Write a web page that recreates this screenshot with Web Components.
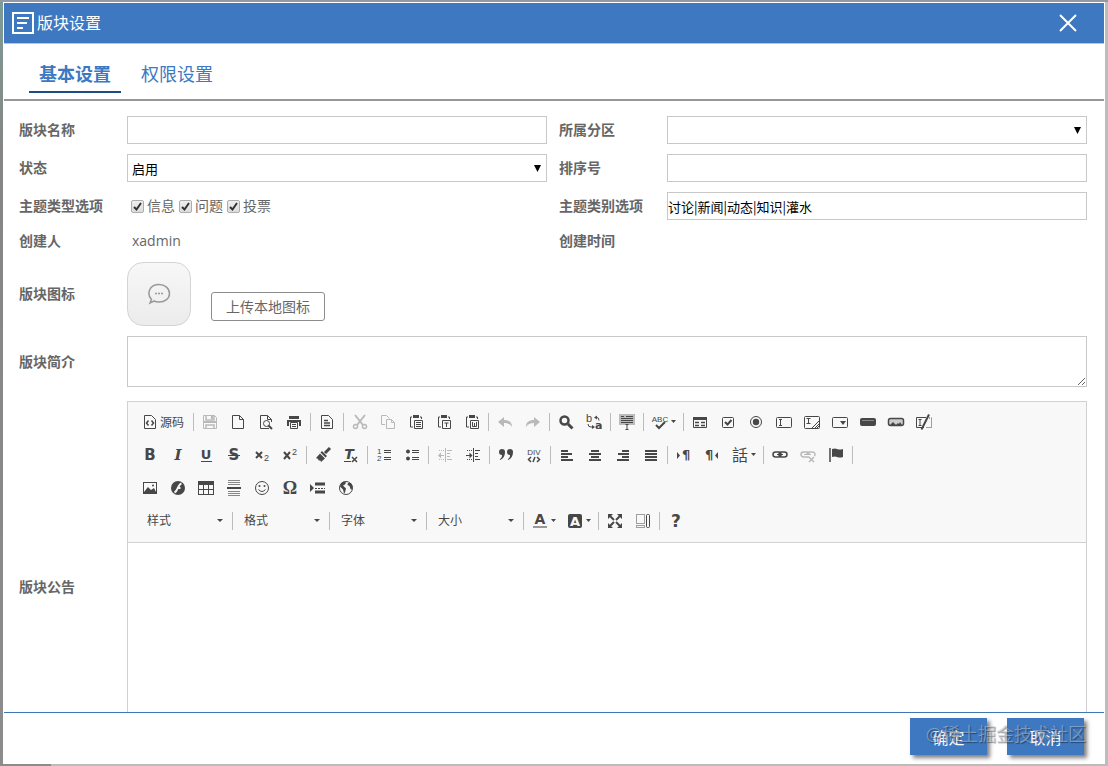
<!DOCTYPE html>
<html lang="zh-CN">
<head>
<meta charset="utf-8">
<title>版块设置</title>
<style>
    :root {
        --clr-primary: #3d78c1;
        --clr-text: #666;
        --clr-line: #c8c8c8;
        --clr-icon: #474747;
    }

    * { box-sizing: border-box; }

    body {
        margin: 0;
        padding: 2px 3px;
        height: 100vh;
        display: flex;
        font: 14px "Open Sans", "Noto Sans CJK SC", sans-serif;
        color: var(--clr-text);
        background:
            linear-gradient(#9298a8, #9298a8) 0 0 / 100% 2px no-repeat,
            linear-gradient(to bottom, #7d9c96, #858585 20%, #8c8c8c) 0 0 / 3px 100% no-repeat,
            linear-gradient(#8c8c8c, #8c8c8c) 0 100% / 51px 2px no-repeat,
            #bcbcbc;
    }
</style>
</head>
<body>

<modal-dialog heading="版块设置">
    <tab-item slot="tabs" active>基本设置</tab-item>
    <tab-item slot="tabs">权限设置</tab-item>

    <text-field label="版块名称"></text-field>
    <select-field label="所属分区"></select-field>
    <select-field label="状态" value="启用"></select-field>
    <text-field label="排序号"></text-field>
    <check-field label="主题类型选项" options="信息,问题,投票"></check-field>
    <text-field label="主题类别选项" value="讨论|新闻|动态|知识|灌水"></text-field>
    <info-field label="创建人" value="xadmin"></info-field>
    <info-field label="创建时间"></info-field>
    <icon-field label="版块图标" wide></icon-field>
    <area-field label="版块简介" wide></area-field>
    <editor-field label="版块公告" wide></editor-field>

    <action-button slot="footer">确定</action-button>
    <action-button slot="footer">取消</action-button>
    <span slot="mark">@稀土掘金技术社区</span>
</modal-dialog>

<script>
const ICONS = {
    source: `<path d="M2.5 1.5h7l4 4v9h-11z"/><path d="M6.5 6.5 4.5 9l2 2.5M9.5 6.5l2 2.5-2 2.5" stroke-width="1.5"/>`,
    save: `<path d="M1.5 1.5h11l2 2v11h-13z"/><path d="M4 1v5h8V1M4 15v-4h8v4" stroke-width="1.5"/><path class="f" d="M9 2h2v3H9zM1 7h14v2H1z"/>`,
    newpage: `<path d="M2.5 1.5h7l4 4v9h-11zM9.5 1.5v4h4"/>`,
    preview: `<path d="M11 14.5H2.5v-13h7l4 4V8M9.5 1.5v4h4"/><circle cx="8.5" cy="9.5" r="3"/><path d="m10.5 11.5 3.5 3.5" stroke-width="2"/>`,
    print: `<path class="f" d="M3 2h10v3H3zM1 6h14v6h-2V8H3v4H1z"/><path d="M4.5 8.5h7v6h-7z"/><path d="M6 10.5h4M6 12.5h4"/>`,
    templates: `<path d="M2.5 1.5h7l4 4v9h-11z"/><path d="M5 6.5h4M5 9h6M5 11.5h6" stroke-width="1.5"/>`,
    cut: `<path d="m3 1 8 10M13 1 5 11" stroke-width="2"/><circle cx="3.5" cy="12.5" r="2" stroke-width="1.5"/><circle cx="12.5" cy="12.5" r="2" stroke-width="1.5"/>`,
    copy: `<path d="M5 10.5H1.5v-9h5l3 3"/><path d="M6.5 5.5h5l3 3v6h-8zM11.5 5.5v3h3"/>`,
    paste: `<path d="M4 3H2.5v10H5M12 3h1.5v2"/><path class="f" d="M5 1h6v3H5z"/><path d="M6.5 6.5h8v8h-8zM8 8.5h5M8 10.5h5M8 12.5h5"/>`,
    pastetext: `<path d="M4 3H2.5v10H5M12 3h1.5v2"/><path class="f" d="M5 1h6v3H5z"/><path d="M6.5 6.5h8v8h-8zM8.5 9h4M10.5 9v4"/>`,
    pasteword: `<path d="M4 3H2.5v10H5M12 3h1.5v2"/><path class="f" d="M5 1h6v3H5z"/><path d="M6.5 6.5h8v8h-8zM8.5 8v4.500h4V8M10.5 9v3"/>`,
    undo: `<path class="f" d="M1 8l6-5v3c5 0 8 2 8 7-2-3-4-4-8-4v4z"/>`,
    redo: `<path class="f" d="M15 8L9 3v3c-5 0-8 2-8 7 2-3 4-4 8-4v4z"/>`,
    find: `<circle cx="6.5" cy="6.5" r="4" stroke-width="2.5"/><path d="m10 10 4.5 4.5" stroke-width="3"/>`,
    replace: `<text class="thin" x="0" y="8" font-size="11">b</text><text x="9" y="15" font-size="11">a</text><path d="M9 3.5h2q2 0 2 3M2 10q0 3 3 3h2"/><path class="f" d="m8 3.500 3-2v4zM9 13l-3-2v4z"/>`,
    selectall: `<path d="M0 0h16v11H0z" fill="#bbb" stroke="none"/><path d="M2 2.5h3M7 2.5h7M2 4.5h12M2 6.5h12M2 8.5h12M8 11v4M6.5 10.5h3M6.5 15.5h3"/>`,
    spell: `<text class="thin" x="8" y="8" font-size="8" text-anchor="middle">ABC</text><path d="m4 11 3 3 6-6" stroke-width="2"/>`,
    form: `<path d="M1.5 3.5h13v10h-13z"/><path class="f" d="M1 3h14v3H1z"/><path d="M3 8.5h4M3 11.5h4M9 8.5h4M9 11.5h4" stroke-width="1.5"/>`,
    checkbox: `<rect x="2.5" y="3.5" width="11" height="10" rx="1"/><path d="m5 8 2.5 2.5L11.5 6" stroke-width="2"/>`,
    radio: `<circle cx="8" cy="8" r="5.5"/><circle class="f" cx="8" cy="8" r="3.2"/>`,
    textfield: `<rect x=".5" y="3.5" width="15" height="10" rx="1"/><path d="M3 5.5h3M3 11.5h3M4.5 5v7"/>`,
    textarea: `<rect x=".5" y="2.5" width="15" height="12" rx="1"/><path d="M2.5 4.5h4M2.5 9.5h4M4.5 4v6M15 7l-7 7M15 10l-4 4M15 12l-2 2"/>`,
    select: `<rect x=".5" y="3.5" width="15" height="10" rx="1"/><path class="f" d="M8 7h6l-3 4z"/>`,
    button: `<rect class="f" x="0" y="4" width="16" height="8" rx="2"/><path d="M2 6.5h12" stroke="#888"/>`,
    imagebutton: `<rect x=".5" y="4.5" width="15" height="7" rx="2" stroke-width="1.5" fill="#ccc"/><path class="f" d="m2 11 3-3 3 3 2-2 1 1 1-2 2 3z"/>`,
    hidden: `<path d="M10 3.5H.5v10H8M2.5 5.5h3M2.5 11.5h3M4 5v7"/><path d="M5.5 15.5 13 .5" stroke-width="2"/><path d="M13 4h2.5v9.500H10" stroke-dasharray="1 1"/>`,
    bold: `<text x="8" y="13" font-size="15" text-anchor="middle">B</text>`,
    italic: `<text x="8" y="13" font-size="15" text-anchor="middle" font-style="italic" style="font-family: 'DejaVu Serif'">I</text>`,
    underline: `<text x="8" y="12" font-size="13" text-anchor="middle">U</text><path d="M3 14.5h11"/>`,
    strike: `<text x="8" y="13" font-size="15" text-anchor="middle">S</text><path d="M2 8.5h12"/>`,
    sub: `<path d="m2 5 6 6M8 5l-6 6" stroke-width="2"/><text class="thin" x="10" y="14" font-size="9">2</text>`,
    sup: `<path d="m2 5 6 7M8 5l-6 7" stroke-width="2"/><text class="thin" x="10" y="8" font-size="9">2</text>`,
    brush: `<path d="m15 1-5 5" stroke-width="3"/><path class="f" d="m7 4 5 5-1.5 1.5-5-5zM5 6.5l5 5L6 15l-1-2-1 1-1-2-2-1z"/>`,
    removeformat: `<text x="6" y="12" font-size="14" text-anchor="middle" font-style="italic">T</text><path d="M1 14.5h7"/><path d="m9 10 5 5M14 10l-5 5" stroke-width="1.5"/>`,
    ol: `<text class="thin" x="1" y="7" font-size="8">1</text><text class="thin" x="1" y="14" font-size="8">2</text><path d="M8 3.5h7M8 5.5h7M8 10.5h7M8 12.5h7"/>`,
    ul: `<circle class="f" cx="4" cy="4.5" r="2"/><circle class="f" cx="4" cy="11.5" r="2"/><path d="M8 3.5h7M8 5.5h7M8 10.5h7M8 12.5h7"/>`,
    outdent: `<path d="M8.5 1v14M10 3.5h5M10 6.5h3M10 9.5h3M10 12.5h5M2 8.5h5"/><path class="f" d="m1 8.5 3-3v6z"/><path d="M2 3.5h5M2 12.5h5" stroke-dasharray="1 1"/>`,
    indent: `<path d="M8.5 1v14M10 3.5h5M10 6.5h3M10 9.5h3M10 12.5h5M1 8.5h5"/><path class="f" d="M7.5 8.5l-3-3v6z"/><path d="M2 3.5h5M2 12.5h5" stroke-dasharray="1 1"/>`,
    quote: `<path class="f" d="M1 5a3 3 0 1 1 6 0c0 4-2 7-5 8v-1c2-1 2-3 2-4-2 0-3-1-3-3zM9 5a3 3 0 1 1 6 0c0 4-2 7-5 8v-1c2-1 2-3 2-4-2 0-3-1-3-3z"/>`,
    div: `<text class="thin" x="8" y="8" font-size="8" text-anchor="middle">DIV</text><path d="M5 10 2.5 12.500 5 15M11 10l2.5 2.500L11 15M9 10l-2 5" stroke-width="1.5"/>`,
    left: `<path d="M2 4h7M2 7h11M2 10h7M2 13h12" stroke-width="2"/>`,
    center: `<path d="M4 4h8M2 7h12M4 10h8M2 13h12" stroke-width="2"/>`,
    right: `<path d="M7 4h7M3 7h11M7 10h7M2 13h12" stroke-width="2"/>`,
    justify: `<path d="M2 4h12M2 7h12M2 10h12M2 13h12" stroke-width="2"/>`,
    ltr: `<path class="f" d="m1 5 3 3.5-3 3.500z"/><text x="6" y="12" font-size="13">¶</text>`,
    rtl: `<path class="f" d="m14 5-3 3.5 3 3.500z"/><text x="1" y="12" font-size="13">¶</text>`,
    language: `<text class="thin" x="8" y="14" font-size="16" text-anchor="middle">話</text>`,
    link: `<rect x="1" y="5" width="8" height="5" rx="2.5" stroke-width="1.5"/><rect x="7" y="5" width="8" height="5" rx="2.5" stroke-width="1.5"/><path d="M5 7.5h6"/>`,
    unlink: `<path d="M9 10H3.500a2.500 2.500 0 0 1 0-5h3Q9 5 9 7.500M7 7.500Q7 5 9.500 5h3a2.500 2.500 0 0 1 2 4" stroke-width="1.5"/><path d="M4 7.5h7"/><path d="m9 10 5 5M14 10l-5 5" stroke-width="1.5"/>`,
    anchor: `<path d="M2 1v14" stroke-width="1.5"/><path class="f" d="M4 2q3-1 5 0 3 1 6 0v8q-3 1-6 0-2-1-5 0z"/>`,
    image: `<rect x="1.5" y="2.5" width="13" height="11"/><path class="f" d="M2 12l4-5 3 3 3-2 2 4v1H2z"/><circle class="f" cx="11" cy="5.5" r="1"/>`,
    flash: `<circle class="f" cx="8" cy="8" r="7"/><path d="M11.5 3.500C8 4 8 11 4.500 12.500M7 8h3.500" stroke="#f8f8f8" stroke-width="2"/>`,
    table: `<rect x=".5" y="1.5" width="15" height="13"/><path class="f" d="M0 1h16v4H0z"/><path d="M5.5 4v10M10.5 4v10M0 9.5h16" />`,
    hr: `<path d="M2 .5h12M2 2.5h12M2 4.5h12M2 11.5h12M2 13.5h12M2 15.5h12" stroke="#888"/><path d="M1 8h14" stroke-width="2"/>`,
    smiley: `<circle cx="8" cy="8" r="6.5"/><circle class="f" cx="5.5" cy="6" r="1"/><circle class="f" cx="10.5" cy="6" r="1"/><path d="M4.5 9.5q3.500 4 7 0"/>`,
    omega: `<text x="8" y="14" font-size="18" text-anchor="middle" style="font-family: 'Liberation Serif'">Ω</text>`,
    pagebreak: `<path class="f" d="m0 4 4 4-4 4z"/><path d="M5 4h10M5 12h10" stroke-width="3"/><path d="M5 8.5h10" stroke-dasharray="2 1"/>`,
    globe: `<circle cx="8" cy="8" r="6.5"/><path class="f" d="M3 3l3-1.500 2 1-1 2-2 1 1 1 2 2-1 4-1 1-1-4-3-3zM10 3l3 0 1.500 3-1 4-1-1-1-3-2-1z"/>`,
    color: `<text x="8" y="11" font-size="14" text-anchor="middle">A</text><path d="M1 14h14" stroke="#999" stroke-width="2"/>`,
    bgcolor: `<rect class="f" x="1" y="1" width="14" height="14" rx="2"/><text x="8" y="13" font-size="13" text-anchor="middle" style="fill: #f8f8f8">A</text>`,
    maximize: `<path d="m3 3 4 4M13 3 9 7M3 13l4-4M13 13 9 9" stroke-width="2"/><path class="f" d="M1 1h5L1 6zM15 1v5l-5-5zM1 15v-5l5 5zM15 15h-5l5-5z"/>`,
    blocks: `<path d="M1.5 1.5h8v9h-8z" stroke-dasharray="1 1"/><rect x="11.5" y="1.5" width="3" height="13" rx="1"/><path d="M1.5 12.5h8v2h-8z" stroke-dasharray="1 1"/>`,
    about: `<text x="8" y="14" font-size="17" text-anchor="middle">?</text>`
};

// name:label, a trailing "!" is a disabled tool, "+" one with a menu, "|" a separator
const TOOLBAR = [
    'source:源码 | save:保存! newpage:新建 preview:预览 print:打印 | templates:模板 | cut:剪切! copy:复制! paste:粘贴 pastetext:粘贴为无格式文本 pasteword:从Word粘贴 | undo:撤消! redo:重做! | find:查找 replace:替换 | selectall:全选 | spell:拼写检查+ | form:表单 checkbox:复选框 radio:单选按钮 textfield:单行文本 textarea:多行文本 select:列表 button:按钮 imagebutton:图像按钮 hidden:隐藏域',
    'bold:加粗 italic:倾斜 underline:下划线 strike:删除线 sub:下标 sup:上标 | brush:复制格式 removeformat:清除格式 | ol:编号列表 ul:项目列表 | outdent:减少缩进! indent:增加缩进 | quote:块引用 div:创建DIV | left:左对齐 center:居中 right:右对齐 justify:两端对齐 | ltr:从左到右 rtl:从右到左 language:语言+ | link:超链接 unlink:取消超链接! anchor:锚点 |',
    'image:图像 flash:Flash table:表格 hr:水平线 smiley:表情 omega:特殊符号 pagebreak:分页符 globe:内嵌框架',
    'combo:样式 | combo:格式 | combo:字体 | combo:大小 | color:文本颜色+ bgcolor:背景颜色+ | maximize:全屏 blocks:显示区块 | about:关于'
];

class ModalDialog extends HTMLElement {
    constructor() {
        super();
        const host = this.attachShadow({ mode: 'open' });
        host.innerHTML = `
            <style>
            :host {
                flex: 1;
                min-width: 0;
                display: flex;
                flex-direction: column;
                border: 1px solid #fff;
                background: #fff;
            }

            header {
                display: flex;
                align-items: center;
                gap: 3px;
                height: 40px;
                padding: 0 26px 0 8px;
                background: var(--clr-primary);
                border-bottom: 1px solid #b4c8e4;
                color: #fff;
            }

            h1 {
                flex: 1;
                margin: 0;
                font-size: 16px;
                font-weight: 400;
                line-height: 24px;
            }

            header svg { display: block; fill: none; stroke: #fff; stroke-width: 2; }

            .close { padding: 0; border: 0; background: none; }

            nav {
                display: flex;
                gap: 10px;
                padding: 13px 25px 6px;
                border-bottom: 2px solid #979797;
            }

            .body {
                flex: 1;
                min-height: 0;
                overflow: hidden;
                display: grid;
                grid-template-columns: 1fr 1fr;
                align-content: start;
                gap: 10px 12px;
                padding: 15px 17px 0 15px;
            }

            footer {
                position: relative;
                display: flex;
                justify-content: flex-end;
                gap: 20px;
                padding: 5px 20px 8px;
                border-top: 1px solid #3d78b4;
            }

            .mark {
                position: absolute;
                right: 18px;
                top: 8px;
                font-size: 18px;
                line-height: 26px;
                color: rgba(190, 200, 215, 0.5);
                text-shadow: 1px 1px 1px rgba(0, 0, 0, 0.4);
                pointer-events: none;
            }
            </style>
            <header>
                <svg width="22" height="22"><path d="M1 1h20v20H1zM5 6h12M5 11h10M5 16h6"/></svg>
                <h1></h1>
                <button class="close" aria-label="关闭">
                    <svg width="20" height="20"><path d="m2 2 16 16M18 2 2 18"/></svg>
                </button>
            </header>
            <nav><slot name="tabs"></slot></nav>
            <div class="body"><slot></slot></div>
            <footer>
                <slot name="footer"></slot>
                <div class="mark"><slot name="mark"></slot></div>
            </footer>
        `;
        host.querySelector('h1').textContent = this.getAttribute('heading');
    }
}

class TabItem extends HTMLElement {
    constructor() {
        super();
        const host = this.attachShadow({ mode: 'open' });
        host.innerHTML = `
            <style>
            :host { display: block; }

            button {
                display: block;
                height: 36px;
                padding: 0 10px;
                border: 0;
                border-bottom: 2px solid transparent;
                background: none;
                font: inherit;
                font-size: 18px;
                line-height: 34px;
                color: var(--clr-primary);
            }

            :host([active]) button {
                font-weight: 700;
                border-color: #1f4e87;
            }
            </style>
            <button><slot></slot></button>
        `;
    }
}

class ActionButton extends HTMLElement {
    constructor() {
        super();
        const host = this.attachShadow({ mode: 'open' });
        host.innerHTML = `
            <style>
            :host { display: block; }

            button {
                display: block;
                width: 77px;
                height: 37px;
                padding: 0;
                border: 0;
                background: var(--clr-primary);
                box-shadow: 3px 3px 4px rgba(0, 0, 0, 0.5);
                font: inherit;
                font-size: 16px;
                color: #fff;
            }
            </style>
            <button><slot></slot></button>
        `;
    }
}

// label on the left, control on the right
class FormField extends HTMLElement {
    constructor() {
        super();
        const host = this.attachShadow({ mode: 'open' });
        host.innerHTML = `
            <style>
            :host {
                display: grid;
                grid-template-columns: 108px minmax(0, 1fr);
                align-items: center;
            }

            :host([wide]) { grid-column: span 2; }

            * { box-sizing: border-box; }

            .label { font-weight: 700; line-height: 22px; }

            input.text, select.box, textarea {
                display: block;
                width: 100%;
                height: 28px;
                margin: 0;
                padding: 0;
                border: 1px solid var(--clr-line);
                border-radius: 0;
                background: #fff;
                font: 13px "Noto Sans CJK SC", sans-serif;
                color: #000;
            }
            </style>
            ${this.labelTag()}
            ${this.control(this.getAttribute('value') || '')}
        `;
    }

    labelTag() {
        return `<label class="label" for="control">${this.getAttribute('label')}</label>`;
    }

    control() {
        return '';
    }
}

class TextField extends FormField {
    control(value) {
        return `<input id="control" class="text" type="text" value="${value}">`;
    }
}

class SelectField extends FormField {
    control(value) {
        return `
            <style>
            .wrap { display: grid; align-items: center; }
            .wrap > * { grid-area: 1 / 1; }
            select.box { appearance: none; padding: 0 20px 0 4px; }
            svg { justify-self: end; margin-right: 6px; pointer-events: none; }
            </style>
            <div class="wrap">
                <select id="control" class="box"><option>${value}</option></select>
                <svg width="7" height="7"><path d="M0 0h7L3.5 7z"/></svg>
            </div>
        `;
    }
}

class CheckField extends FormField {
    labelTag() {
        return `<span class="label" id="caption">${this.getAttribute('label')}</span>`;
    }

    control() {
        const boxes = this.getAttribute('options').split(',').map((name) => `
            <label>
                <span class="box">
                    <input type="checkbox" checked>
                    <svg width="13" height="13"><path d="m3 7 2.5 2.5L10 3"/></svg>
                </span>
                ${name}
            </label>
        `).join('');

        return `
            <style>
            .group { display: flex; gap: 4px; padding-left: 4px; }
            .group label { display: flex; align-items: center; gap: 3px; line-height: 28px; }
            .box { display: grid; }
            .box > * { grid-area: 1 / 1; }
            svg { fill: none; stroke: #333; stroke-width: 2; pointer-events: none; }
            input:not(:checked) + svg { display: none; }

            input {
                appearance: none;
                width: 13px;
                height: 13px;
                margin: 0;
                border: 1px solid #adadad;
                border-radius: 2px;
                background: linear-gradient(#efefef, #dcdcdc);
            }
            </style>
            <div class="group" role="group" aria-labelledby="caption">${boxes}</div>
        `;
    }
}

class InfoField extends FormField {
    labelTag() {
        return `<span class="label">${this.getAttribute('label')}</span>`;
    }

    control(value) {
        return `
            <style>span.value { padding-left: 5px; line-height: 22px; }</style>
            <span class="value">${value}</span>
        `;
    }
}

class IconField extends FormField {
    control() {
        return `
            <style>
            .row { display: flex; align-items: flex-end; gap: 20px; }

            .preview {
                display: grid;
                place-items: center;
                width: 64px;
                height: 64px;
                border: 1px solid #d4d4d4;
                border-radius: 16px;
                background: linear-gradient(#f7f7f7, #ececec);
            }

            .preview svg { fill: none; stroke: #999; stroke-width: 1.5; }

            button {
                height: 29px;
                margin-bottom: 5px;
                padding: 0 14px;
                border: 1px solid #8c8c8c;
                border-radius: 3px;
                background: #fff;
                font: inherit;
                line-height: 26px;
                color: inherit;
            }
            </style>
            <div class="row">
                <div class="preview">
                    <svg width="24" height="22">
                        <path d="M4.5 16.5C-.5 11 2 1.500 12 1.500c6 0 10.500 4 10.500 9S18 19 12 19q-3 0-5-1l-4 2z"/>
                        <path d="M8 10.5h2M11 10.5h2M14 10.5h2"/>
                    </svg>
                </div>
                <button id="control">上传本地图标</button>
            </div>
        `;
    }
}

class AreaField extends FormField {
    control(value) {
        return `
            <style>textarea { height: 51px; resize: vertical; }</style>
            <textarea id="control">${value}</textarea>
        `;
    }
}

class EditorField extends FormField {
    control() {
        return `
            <style>
            :host { margin-top: 4px; }
            .editor { border: 1px solid #d1d1d1; }

            .toolbar {
                padding: 3px 8px 5px;
                border-bottom: 1px solid #d1d1d1;
                background: #f8f8f8;
            }

            .tools { display: flex; height: 33px; }
            .tools:last-child { padding-left: 2px; }
            textarea { height: 229px; border: 0; resize: none; }
            </style>
            <div class="editor">
                <div class="toolbar">
                    ${TOOLBAR.map((row) => `<div class="tools">${this.tools(row)}</div>`).join('')}
                </div>
                <textarea id="control"></textarea>
            </div>
        `;
    }

    tools(row) {
        return row.split(' ').map((item) => {
            if (item === '|') return '<tool-separator></tool-separator>';
            const [icon, text] = item.split(':');
            const label = text.replace(/[!+]$/, '');
            if (icon === 'combo') return `<tool-combo label="${label}"></tool-combo>`;
            const flags = [
                text.endsWith('!') ? 'disabled' : '',
                text.endsWith('+') ? 'menu' : '',
                icon === 'source' ? 'caption' : ''
            ].join(' ');
            return `<tool-button icon="${icon}" label="${label}" ${flags}></tool-button>`;
        }).join('');
    }
}

class ToolButton extends HTMLElement {
    connectedCallback() {
        if (this.shadowRoot) return;
        const label = this.getAttribute('label');
        const host = this.attachShadow({ mode: 'open' });
        host.innerHTML = `
            <style>
            :host { display: block; width: 28px; }
            :host([menu]) { width: 35px; }
            :host([caption]) { width: 55px; }

            button {
                display: flex;
                align-items: center;
                width: 100%;
                height: 33px;
                padding: 0 0 0 6px;
                border: 0;
                background: none;
                font: inherit;
                font-size: 12px;
                white-space: nowrap;
                color: var(--clr-icon);
            }

            button:disabled { opacity: 0.35; }

            svg { flex: none; overflow: visible; fill: none; stroke: var(--clr-icon); }
            svg .f, svg text { fill: var(--clr-icon); stroke: none; }
            svg text { font-family: "DejaVu Sans", "Noto Sans CJK SC", sans-serif; font-weight: 700; }
            svg .thin { font-family: "Liberation Sans", "Noto Sans CJK SC", sans-serif; font-weight: 400; }
            span { margin-left: 2px; }
            .arrow { margin-left: 3px; }
            </style>
            <button aria-label="${label}" ${this.hasAttribute('disabled') ? 'disabled' : ''}>
                <svg width="16" height="16">${ICONS[this.getAttribute('icon')]}</svg>
                ${this.hasAttribute('caption') ? `<span>${label}</span>` : ''}
                ${this.hasAttribute('menu') ? '<svg class="arrow" width="5" height="3"><path class="f" d="M0 0h5L2.5 3z"/></svg>' : ''}
            </button>
        `;
    }
}

class ToolCombo extends HTMLElement {
    connectedCallback() {
        if (this.shadowRoot) return;
        const label = this.getAttribute('label');
        const host = this.attachShadow({ mode: 'open' });
        host.innerHTML = `
            <style>
            :host { display: grid; width: 92px; align-items: center; }

            select {
                grid-area: 1 / 1;
                appearance: none;
                width: 100%;
                height: 24px;
                margin: 0;
                padding: 0 20px 0 9px;
                border: 0;
                background: none;
                font: inherit;
                font-size: 12px;
                color: var(--clr-icon);
            }

            svg {
                grid-area: 1 / 1;
                justify-self: end;
                margin-right: 7px;
                fill: var(--clr-icon);
                pointer-events: none;
            }
            </style>
            <select aria-label="${label}"><option>${label}</option></select>
            <svg width="6" height="3"><path d="M0 0h6L3 3z"/></svg>
        `;
    }
}

class ToolSeparator extends HTMLElement {
    constructor() {
        super();
        const host = this.attachShadow({ mode: 'open' });
        host.innerHTML = `
            <style>
            :host {
                display: block;
                width: 1px;
                height: 18px;
                margin: 8px 2px;
                background: #bcbcbc;
            }
            </style>
        `;
    }
}

customElements.define("tool-button", ToolButton);
customElements.define("tool-combo", ToolCombo);
customElements.define("tool-separator", ToolSeparator);
customElements.define("text-field", TextField);
customElements.define("select-field", SelectField);
customElements.define("check-field", CheckField);
customElements.define("info-field", InfoField);
customElements.define("icon-field", IconField);
customElements.define("area-field", AreaField);
customElements.define("editor-field", EditorField);
customElements.define("tab-item", TabItem);
customElements.define("action-button", ActionButton);
customElements.define("modal-dialog", ModalDialog);
</script>
</body>
</html>
